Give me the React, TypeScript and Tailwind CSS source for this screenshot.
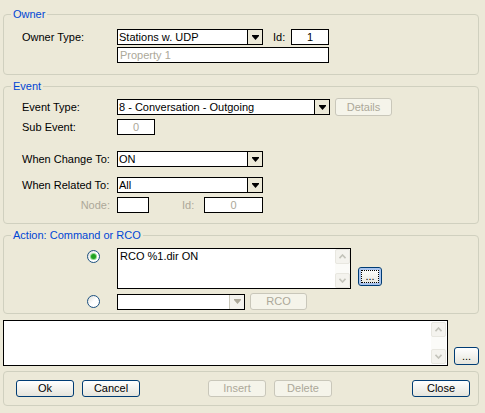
import React from 'react'

const FONT = "font-['Liberation_Sans',Arial,sans-serif] text-[11px] leading-[13px]"

function Arrow({ disabled }: { disabled?: boolean }) {
  return (
    <svg width="7" height="5" viewBox="0 0 7 5" fill={disabled ? '#aca899' : '#000'}>
      <rect x="0" y="0" width="7" height="1" />
      <polygon points="0,1 7,1 3.5,5" />
    </svg>
  )
}

function Combo({ text, className, disabled }: { text?: string; className: string; disabled?: boolean }) {
  return (
    <div className={`flex h-[16px] border border-black bg-white ${className}`}>
      <div className="flex-1 pl-[1px] leading-[14px] whitespace-nowrap overflow-hidden">{text}</div>
      <div className={`w-[15px] h-full flex items-center justify-center border-l ${disabled ? 'border-[#c9c7ba] bg-[#f4f3ee]' : 'border-black bg-[#ece9d8]'}`}>
        <Arrow disabled={disabled} />
      </div>
    </div>
  )
}

function Box({ text, className, muted, center }: { text?: string; className: string; muted?: boolean; center?: boolean }) {
  return (
    <div className={`h-[16px] border border-black bg-white leading-[14px] whitespace-nowrap ${center ? 'text-center' : 'pl-[2px]'} ${muted ? 'text-[#aca899]' : 'text-black'} ${className}`}>
      {text}
    </div>
  )
}

function Btn({ label, disabled, className }: { label: string; disabled?: boolean; className: string }) {
  return (
    <div
      className={`flex items-center justify-center rounded-[3px] border ${
        disabled
          ? 'border-[#c9c7ba] bg-[#f5f4ea] text-[#aca899]'
          : 'border-[#003c74] bg-linear-to-b from-white to-[#e6e5dc] text-black'
      } ${className}`}
    >
      {label}
    </div>
  )
}

function Chevron({ up }: { up?: boolean }) {
  return (
    <svg width="7" height="5" viewBox="0 0 7 5" fill="none" stroke="#c3c3ba" strokeWidth="1.6">
      {up ? <polyline points="0.5,4.2 3.5,1 6.5,4.2" /> : <polyline points="0.5,0.8 3.5,4 6.5,0.8" />}
    </svg>
  )
}

function ScrollBar() {
  return (
    <div className="w-[15px] h-full flex flex-col justify-between bg-[#fbfbf8]">
      <div className="h-[15px] flex items-center justify-center rounded-[2px] border border-[#e8e7e0] bg-[#f4f3ee]">
        <Chevron up />
      </div>
      <div className="h-[15px] flex items-center justify-center rounded-[2px] border border-[#e8e7e0] bg-[#f4f3ee]">
        <Chevron />
      </div>
    </div>
  )
}

function Radio({ checked, className }: { checked?: boolean; className: string }) {
  return (
    <div className={`w-[13px] h-[13px] rounded-full border border-[#1c5180] bg-linear-to-br from-[#dcdcd7] via-white to-white flex items-center justify-center ${className}`}>
      {checked && <div className="w-[5px] h-[5px] rounded-full bg-[#21a121] shadow-[0_0_0_1px_#8ddc8d]" />}
    </div>
  )
}

function Group({ title, className, children }: { title?: string; className: string; children: React.ReactNode }) {
  return (
    <fieldset className={`w-[476px] border border-[#d0d0bf] rounded-[4px] ${className}`}>
      {title && <legend className="ml-[7px] px-[2px] text-[#0046d5] leading-[13px]">{title}</legend>}
      {children}
    </fieldset>
  )
}

export default function App() {
  return (
    <div className={`w-[485px] h-[413px] bg-[#ece9d8] pl-[3px] pt-[8px] overflow-hidden text-black ${FONT}`}>
      {/* Owner */}
      <Group title="Owner" className="pb-[11px]">
        <div className="flex items-center mt-[8px]">
          <span className="w-[113px] pl-[18px]">Owner Type:</span>
          <Combo text="Stations w. UDP" className="w-[146px]" />
          <span className="w-[18px] ml-[10px]">Id:</span>
          <Box text="1" center className="w-[38px]" />
        </div>
        <div className="flex mt-[2px] pl-[113px]">
          <Box text="Property 1" muted className="w-[212px]" />
        </div>
      </Group>

      {/* Event */}
      <Group title="Event" className="mt-[5px] pb-[10px]">
        <div className="flex items-center mt-[5px] h-[18px]">
          <span className="w-[113px] pl-[18px]">Event Type:</span>
          <Combo text="8 - Conversation - Outgoing" className="w-[213px]" />
          <Btn label="Details" disabled className="ml-[5px] w-[57px] h-[18px]" />
        </div>
        <div className="flex items-center mt-[3px]">
          <span className="w-[113px] pl-[18px]">Sub Event:</span>
          <Box text="0" muted center className="w-[38px]" />
        </div>
        <div className="flex items-center mt-[16px]">
          <span className="w-[113px] pl-[18px]">When Change To:</span>
          <Combo text="ON" className="w-[146px]" />
        </div>
        <div className="flex items-center mt-[10px]">
          <span className="w-[113px] pl-[18px]">When Related To:</span>
          <Combo text="All" className="w-[146px]" />
        </div>
        <div className="flex items-center mt-[4px] text-[#aca899]">
          <span className="w-[113px] pr-[7px] text-right">Node:</span>
          <Box className="w-[32px]" />
          <span className="w-[22px] ml-[33px]">Id:</span>
          <Box text="0" muted center className="w-[59px]" />
        </div>
      </Group>

      {/* Action */}
      <Group title="Action: Command or RCO" className="mt-[5px] pb-[3px]">
        <div className="flex mt-[6px]">
          <div className="w-[113px] pl-[83px] pt-[2px]">
            <Radio checked className="" />
          </div>
          <div className="w-[234px] h-[41px] flex border border-black bg-white">
            <div className="flex-1 pl-[2px] pt-[1px]">RCO %1.dir ON</div>
            <ScrollBar />
          </div>
          <div className="ml-[7px] mt-[19px] w-[24px] h-[19px] rounded-[3px] border border-[#003c74] bg-linear-to-b from-white to-[#e6e5dc] shadow-[inset_0_0_0_2px_#a9c4ee] p-[2px]">
            <div className="w-full h-full border border-dotted border-black flex items-end justify-center leading-[11px]">...</div>
          </div>
        </div>
        <div className="flex items-center mt-[4px]">
          <div className="w-[113px] pl-[83px]">
            <Radio className="" />
          </div>
          <Combo disabled className="w-[128px]" />
          <Btn label="RCO" disabled className="ml-[5px] w-[57px] h-[17px]" />
        </div>
      </Group>

      {/* Free text */}
      <div className="flex items-end mt-[6px]">
        <div className="w-[445px] h-[46px] flex border border-black bg-white">
          <div className="flex-1" />
          <div className="py-[1px] pr-[1px]">
            <ScrollBar />
          </div>
        </div>
        <Btn label="..." className="ml-[6px] mb-[1px] w-[25px] h-[18px] leading-[10px] items-end pb-[3px]" />
      </div>

      {/* Buttons */}
      <Group className="mt-[5px] pt-[8px] pb-[8px] w-[475px]">
        <div className="flex items-center">
          <Btn label="Ok" className="ml-[12px] w-[58px] h-[17px]" />
          <Btn label="Cancel" className="ml-[8px] w-[58px] h-[17px]" />
          <Btn label="Insert" disabled className="ml-[68px] w-[58px] h-[17px]" />
          <Btn label="Delete" disabled className="ml-[8px] w-[58px] h-[17px]" />
          <Btn label="Close" className="ml-[80px] w-[58px] h-[17px]" />
        </div>
      </Group>
    </div>
  )
}
